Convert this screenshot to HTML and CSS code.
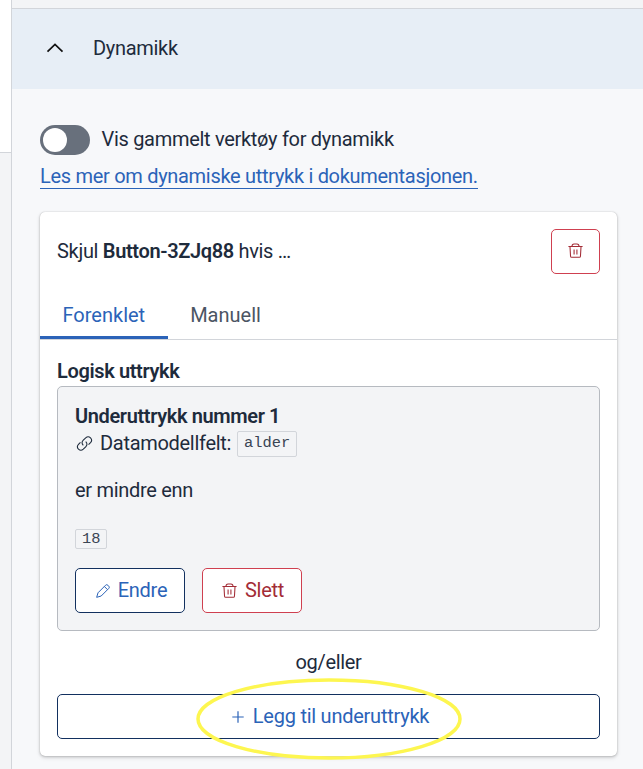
FILE: index.html
```html
<!DOCTYPE html>
<html lang="nb">
<head>
<meta charset="utf-8">
<title>Dynamikk</title>
<link rel="stylesheet" href="styles.css">
</head>
<body>
<svg class="defs" aria-hidden="true">
  <symbol id="trash" viewBox="0 0 24 24">
    <path d="M2 6.300h20M7 6.300c0-2 1.200-3.500 3-3.500h4c1.800 0 3 1.500 3 3.500M4.200 6.300l.8 13.700q.1 1.500 1.600 1.500h10.800q1.500 0 1.600-1.500l.8-13.700M10 10.500v7M14 10.500v7"/>
  </symbol>
</svg>
<div class="app">
  <aside class="rail"><div class="rail-top"></div></aside>
  <main class="panel">
    <div class="strip"></div>
    <button class="accordion">
      <svg class="chevron" viewBox="0 0 18 10"><path d="M1.500 8.700 9 1.400l7.500 7.300"/></svg>
      <span>Dynamikk</span>
    </button>
    <div class="content">
      <label class="switch-row"><span class="switch"></span><span>Vis gammelt verktøy for dynamikk</span></label>
      <a class="link">Les mer om dynamiske uttrykk i dokumentasjonen.</a>
      <section class="card">
        <header class="card-head">
          <p>Skjul <b>Button-3ZJq88</b> hvis …</p>
          <button class="btn danger icon-only"><svg class="icon"><use href="#trash"/></svg></button>
        </header>
        <nav class="tabs">
          <button class="tab active">Forenklet</button>
          <button class="tab">Manuell</button>
        </nav>
        <div class="card-body">
          <h2>Logisk uttrykk</h2>
          <div class="expression">
            <h3>Underuttrykk nummer 1</h3>
            <div class="field">
              <svg class="icon link-icon" viewBox="0 0 24 24"><path d="M10.300 14.600q-3.600-3.600 0-7.200l3.400-3.400q3.400-3.200 6.800 0 3.200 3.400 0 6.800l-2.800 2.800M13.700 9.400q3.600 3.600 0 7.200l-3.400 3.400q-3.400 3.200-6.800 0-3.200-3.400 0-6.800l2.800-2.800"/></svg>
              <span>Datamodellfelt:</span>
              <code class="tag">alder</code>
            </div>
            <p class="operator">er mindre enn</p>
            <code class="tag small">18</code>
            <div class="actions">
              <button class="btn edit"><svg class="icon pencil" viewBox="0 0 24 24"><path d="M2.500 21.500l2-6.800L15.800 3.400a2.500 2.500 0 0 1 3.600 0l1.200 1.200a2.500 2.500 0 0 1 0 3.600L9.300 19.500zM14 5.200l4.800 4.800"/></svg>Endre</button>
              <button class="btn danger delete"><svg class="icon"><use href="#trash"/></svg>Slett</button>
            </div>
          </div>
          <p class="joiner">og/eller</p>
          <button class="btn add"><svg class="icon plus" viewBox="0 0 12 12"><path d="M6 .3v11.400M.3 6h11.400"/></svg>Legg til underuttrykk
            <svg class="highlight" viewBox="0 0 268 84"><ellipse cx="134" cy="42" rx="131" ry="39"/></svg>
          </button>
        </div>
      </section>
    </div>
  </main>
</div>
</body>
</html>
```

FILE: styles.css
```css
* { box-sizing: border-box; }
body {
  margin: 0;
  overflow: hidden;
  font: 20px/27px Roboto, sans-serif;
  letter-spacing: -0.3px;
  color: #1e2b3c;
}
h2, h3, p { margin: 0; font-size: inherit; }
h2, h3, b { font-weight: 600; }
h2, h3, b { letter-spacing: -0.37px; }
button { font: inherit; letter-spacing: inherit; color: inherit; margin: 0; padding: 0; border: 0; background: none; }
svg { flex: none; fill: none; stroke: currentColor; }
.defs { display: none; }
.app { display: flex; height: 769px; }
.rail { flex: none; width: 12px; background: #f3f4f6; border-right: 1px solid #d2d5da; }
.rail-top { height: 153px; background: #fff; border-bottom: 1px solid #d2d5da; }
.panel { flex: 1; background: #f7f8fa; }
.strip { height: 9px; background: #f3f4f6; border-bottom: 1px solid #d2d5da; }
.accordion {
  display: flex;
  align-items: center;
  gap: 29px;
  width: 100%;
  height: 80px;
  padding: 0 0 2px 34px;
  background: #e7eef6;
}
.chevron { width: 18px; height: 10px; color: #111; stroke-width: 1.7; }
.content { padding: 36px 26px 0 28px; }
.switch-row { display: flex; align-items: center; gap: 11.5px; height: 30px; }
.switch-row span:last-child { padding-bottom: 2px; }
.switch { width: 50px; height: 30px; padding: 3px; border-radius: 15px; background: #68707c; }
.switch::before { content: ""; display: block; width: 24px; height: 24px; border-radius: 50%; background: #fff; }
.link { display: block; width: max-content; height: 26px; margin-top: 8px; line-height: 27px; color: #2b63b8; border-bottom: 1px solid #2b63b8; }
.card {
  margin-top: 23px;
  height: 544px;
  border-radius: 5px;
  background: #fff;
  box-shadow: 0 0 1px rgba(0,0,0,.25), 0 1px 3px rgba(0,0,0,.2), 0 2px 5px rgba(0,0,0,.08);
}
.card-head { display: flex; justify-content: space-between; align-items: center; padding: 17px 17px 0; }
.btn {
  display: flex;
  align-items: center;
  justify-content: center;
  height: 45px;
  border: 1px solid #12305f;
  border-radius: 5px;
  background: #fff;
  color: #2b63b8;
}
.danger { border-color: #cf4050; color: #a32c36; }
.icon { width: 17px; height: 17px; stroke-width: 1.5; }
.icon-only { width: 49px; padding-bottom: 2px; }
.tabs { display: flex; height: 66px; padding-top: 16px; border-bottom: 1px solid #d2d5da; letter-spacing: 0; }
.tab { height: 49px; padding: 5px 22.5px 0; color: #4b5563; border-bottom: 3px solid transparent; }
.active { color: #2b63b8; border-image: linear-gradient(#2b63b8, #2b63b8) 3; }
.card-body { padding: 18px 17px 0; }
.expression { height: 245px; margin-top: 1px; padding: 16px 17px; border: 1px solid #b6bac0; border-radius: 5px; background: #f3f4f6; }
.field { display: flex; align-items: center; height: 27px; }
.link-icon { margin: 0 7px 0 1px; }
.tag {
  display: block;
  width: max-content;
  height: 26px;
  margin-left: 6px;
  padding: 0 6px;
  border: 1px solid #d2d5da;
  border-radius: 2px;
  color: #3a4554;
  font: 15.400px/22px "Liberation Mono", monospace;
  letter-spacing: 0;
}
.operator { margin-top: 20px; }
.small { width: 32px; height: 20px; margin: 25px 0 0; line-height: 18px; }
.actions { display: flex; gap: 17px; margin-top: 19px; }
.edit { width: 110px; gap: 7px; padding-left: 2px; }
.pencil { width: 16px; height: 16px; }
.delete { width: 100px; gap: 7px; padding-left: 1px; }
.joiner { margin-top: 18px; text-align: center; }
.add { position: relative; width: 100%; margin-top: 18px; padding-left: 4px; gap: 9px; letter-spacing: -0.25px; }
.plus { width: 12px; height: 12px; stroke-width: 1.2; }
.highlight { position: absolute; left: 137px; top: -18px; width: 268px; height: 84px; stroke: #fdf650; stroke-width: 3.5; }
```
